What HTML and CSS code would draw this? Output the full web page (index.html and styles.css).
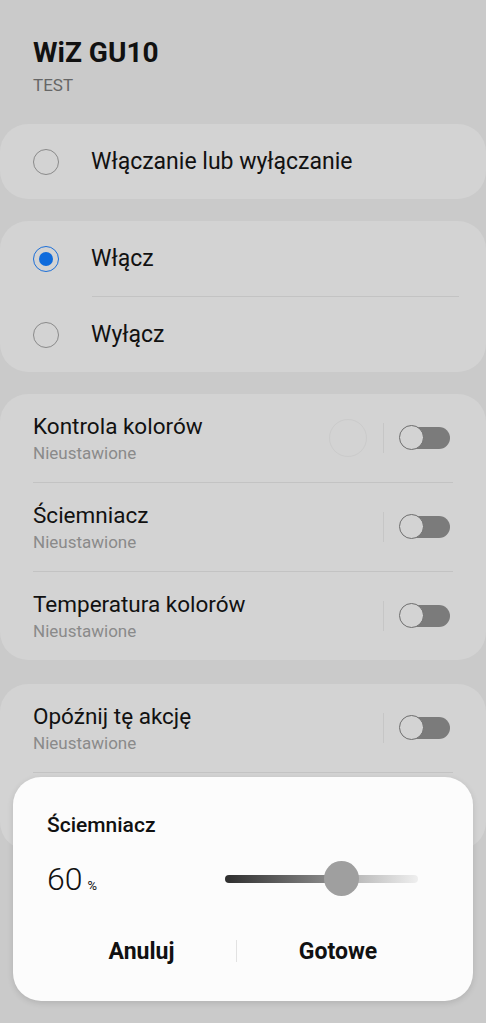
FILE: index.html
```html
<!DOCTYPE html>
<html>
<head>
    <meta charset="UTF-8">
    <meta name="viewport" content="width=device-width, initial-scale=1.0">
    <title>WiZ GU10</title>
    <link rel="stylesheet" href="styles.css">
</head>
<body>
    <div id="header">
        <div class="title">WiZ GU10</div>
        <div class="subtitle">TEST</div>
    </div>

    <div class="card">
        <div class="radioRow">
            <span class="radio"></span>
            <span class="label">Włączanie lub wyłączanie</span>
        </div>
    </div>

    <div class="card">
        <div class="radioRow">
            <span class="radio checked"></span>
            <span class="label">Włącz</span>
        </div>
        <div class="radioDivider"></div>
        <div class="radioRow">
            <span class="radio"></span>
            <span class="label">Wyłącz</span>
        </div>
    </div>

    <div class="card">
        <div class="optionRow">
            <div class="optionText">
                <div class="optionTitle">Kontrola kolorów</div>
                <div class="optionSub">Nieustawione</div>
            </div>
            <span class="colorDot"></span>
            <span class="vline"></span>
            <span class="switch"></span>
        </div>
        <div class="rowDivider"></div>
        <div class="optionRow">
            <div class="optionText">
                <div class="optionTitle">Ściemniacz</div>
                <div class="optionSub">Nieustawione</div>
            </div>
            <span class="vline"></span>
            <span class="switch"></span>
        </div>
        <div class="rowDivider"></div>
        <div class="optionRow">
            <div class="optionText">
                <div class="optionTitle">Temperatura kolorów</div>
                <div class="optionSub">Nieustawione</div>
            </div>
            <span class="vline"></span>
            <span class="switch"></span>
        </div>
    </div>

    <div class="card lastCard">
        <div class="optionRow">
            <div class="optionText">
                <div class="optionTitle">Opóźnij tę akcję</div>
                <div class="optionSub">Nieustawione</div>
            </div>
            <span class="vline"></span>
            <span class="switch"></span>
        </div>
        <div class="rowDivider"></div>
    </div>

    <div id="dialog">
        <div class="dialogTitle">Ściemniacz</div>
        <div class="dialogValue">
            <div class="percent"><span class="number">60</span><span class="unit">%</span></div>
            <div class="slider">
                <div class="track"></div>
                <div class="thumb" style="left: 60%;"></div>
            </div>
        </div>
        <div class="dialogButtons">
            <button class="dialogButton cancel">Anuluj</button>
            <span class="buttonDivider"></span>
            <button class="dialogButton">Gotowe</button>
        </div>
    </div>
</body>
</html>
```

FILE: styles.css
```css
body {
    margin: 0;
    background-color: #cacaca;
    color: #111;
    font-family: Roboto, "Noto Sans", sans-serif;
    height: 1023px;
    overflow: hidden;
    position: relative;
}

#header {
    padding: 36px 33px 0;
    height: 124px;
    box-sizing: border-box;
}

.title {
    font-size: 28px;
    font-weight: 700;
    line-height: 34px;
}

.subtitle {
    font-size: 17px;
    color: #666;
    line-height: 20px;
    margin-top: 5px;
}

.card {
    background-color: #d3d3d3;
    border-radius: 28px;
    margin: 0 0 22px;
}

.radioRow {
    display: flex;
    align-items: center;
    height: 75px;
    padding-left: 33px;
}

.radio {
    width: 24px;
    height: 24px;
    border: 1.5px solid #8a8a8a;
    border-radius: 50%;
    margin-right: 32px;
    flex-shrink: 0;
    display: flex;
    align-items: center;
    justify-content: center;
}

.radio.checked {
    border-color: #1c6fd8;
}

.radio.checked::after {
    content: "";
    width: 14px;
    height: 14px;
    border-radius: 50%;
    background-color: #0f6bdc;
}

.label {
    font-size: 23px;
}

.radioDivider {
    height: 1px;
    background-color: #c3c3c3;
    margin: 0 27px 0 92px;
}

.optionRow {
    display: flex;
    align-items: center;
    height: 88px;
    padding: 0 36px 0 33px;
}

.optionText {
    flex: 1;
}

.optionTitle {
    font-size: 22.5px;
    line-height: 27px;
}

.optionSub {
    font-size: 17px;
    color: #8a8a8a;
    line-height: 20px;
    margin-top: 3px;
}

.colorDot {
    width: 36px;
    height: 36px;
    border-radius: 50%;
    border: 1px solid #cbcbcb;
    margin-right: 16px;
}

.vline {
    width: 1px;
    height: 30px;
    background-color: #c6c6c6;
    margin-right: 15px;
}

.switch {
    position: relative;
    width: 51px;
    height: 26px;
}

.switch::before {
    content: "";
    position: absolute;
    left: 4px;
    right: 0;
    top: 2px;
    bottom: 2px;
    border-radius: 12px;
    background-color: #7b7b7b;
}

.switch::after {
    content: "";
    position: absolute;
    left: 0;
    top: 0;
    width: 23px;
    height: 23px;
    border-radius: 50%;
    border: 1.5px solid #6e6e6e;
    background-color: #d3d3d3;
}

.rowDivider {
    height: 1px;
    background-color: #c3c3c3;
    margin: 0 33px;
}

.lastCard {
    height: 166px;
    margin-top: 24px;
}

#dialog {
    position: absolute;
    left: 13px;
    right: 13px;
    top: 777px;
    height: 224px;
    background-color: #fcfcfc;
    border-radius: 28px;
    box-shadow: 0 2px 6px rgba(0, 0, 0, 0.12);
    padding: 35px 34px 0;
    box-sizing: border-box;
}

.dialogTitle {
    font-size: 21px;
    font-weight: 500;
    line-height: 26px;
}

.dialogValue {
    display: flex;
    align-items: center;
    height: 66px;
    margin-top: 8px;
}

.percent {
    width: 178px;
    display: flex;
    align-items: baseline;
}

.number {
    font-size: 32px;
    font-weight: 300;
}

.unit {
    font-size: 13px;
    margin-left: 5px;
}

.slider {
    position: relative;
    width: 193px;
    height: 36px;
    display: flex;
    align-items: center;
}

.track {
    width: 100%;
    height: 8px;
    border-radius: 4px;
    background: linear-gradient(to right, #2e2e2e, #8c8c8c 55%, #bdbdbd 70%, #efefef);
}

.thumb {
    position: absolute;
    top: 0;
    width: 35px;
    height: 35px;
    margin-left: -17px;
    border-radius: 50%;
    background-color: #9f9f9f;
}

.dialogButtons {
    display: flex;
    align-items: center;
    margin-top: 19px;
}

.dialogButton {
    flex: 1;
    background: none;
    border: none;
    font-family: Roboto, "Noto Sans", sans-serif;
    font-size: 23px;
    font-weight: 700;
    color: #111;
    padding: 0;
    height: 40px;
}

.dialogButton.cancel {
    flex: 0 0 189px;
}

.buttonDivider {
    width: 1px;
    height: 22px;
    background-color: #e2e2e2;
}
```
